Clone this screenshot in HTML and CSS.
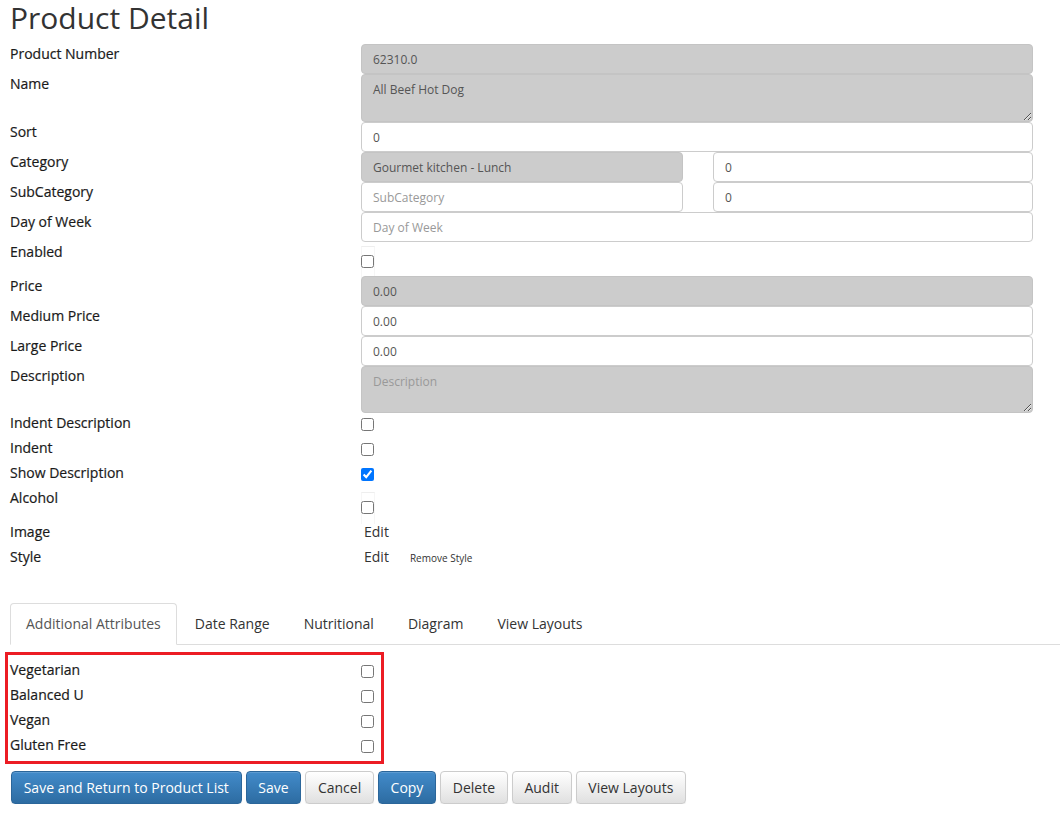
FILE: index.html
```html
<!DOCTYPE html>
<html lang="en">
<head>
    <meta charset="UTF-8">
    <title>Product Detail</title>
    <link rel="stylesheet" href="styles.css">
</head>
<body>
    <div class="page">
        <h1 class="page-title">Product Detail</h1>

        <div class="form">
            <div class="field">
                <label>Product Number</label>
                <input class="control readonly" type="text" value="62310.0" readonly>
            </div>
            <div class="field">
                <label>Name</label>
                <textarea class="control readonly area-name" readonly>All Beef Hot Dog</textarea>
            </div>
            <div class="field">
                <label>Sort</label>
                <input class="control" type="text" value="0">
            </div>
            <div class="field">
                <label>Category</label>
                <div class="split">
                    <input class="control readonly" type="text" value="Gourmet kitchen - Lunch" readonly>
                    <input class="control" type="text" value="0">
                </div>
            </div>
            <div class="field">
                <label>SubCategory</label>
                <div class="split">
                    <input class="control" type="text" placeholder="SubCategory">
                    <input class="control" type="text" value="0">
                </div>
            </div>
            <div class="field">
                <label>Day of Week</label>
                <input class="control" type="text" placeholder="Day of Week">
            </div>
            <div class="field tall">
                <label>Enabled</label>
                <div class="check-wrap"><input type="checkbox"></div>
            </div>
            <div class="field">
                <label>Price</label>
                <input class="control readonly" type="text" value="0.00" readonly>
            </div>
            <div class="field">
                <label>Medium Price</label>
                <input class="control" type="text" value="0.00">
            </div>
            <div class="field">
                <label>Large Price</label>
                <input class="control" type="text" value="0.00">
            </div>
            <div class="field">
                <label>Description</label>
                <textarea class="control readonly area-desc" placeholder="Description" readonly></textarea>
            </div>
            <div class="field short">
                <label>Indent Description</label>
                <input type="checkbox">
            </div>
            <div class="field short">
                <label>Indent</label>
                <input type="checkbox">
            </div>
            <div class="field short">
                <label>Show Description</label>
                <input type="checkbox" checked>
            </div>
            <div class="field tall">
                <label>Alcohol</label>
                <div class="check-wrap"><input type="checkbox"></div>
            </div>
            <div class="field short">
                <label>Image</label>
                <div class="links"><a class="link">Edit</a></div>
            </div>
            <div class="field short">
                <label>Style</label>
                <div class="links"><a class="link">Edit</a><a class="link-small">Remove Style</a></div>
            </div>
        </div>

        <ul class="tabs">
            <li class="tab active">Additional Attributes</li>
            <li class="tab">Date Range</li>
            <li class="tab">Nutritional</li>
            <li class="tab">Diagram</li>
            <li class="tab">View Layouts</li>
        </ul>

        <div class="attributes">
            <div class="field short">
                <label>Vegetarian</label>
                <input type="checkbox">
            </div>
            <div class="field short">
                <label>Balanced U</label>
                <input type="checkbox">
            </div>
            <div class="field short">
                <label>Vegan</label>
                <input type="checkbox">
            </div>
            <div class="field short">
                <label>Gluten Free</label>
                <input type="checkbox">
            </div>
        </div>

        <div class="actions">
            <button class="btn primary">Save and Return to Product List</button>
            <button class="btn primary">Save</button>
            <button class="btn">Cancel</button>
            <button class="btn primary">Copy</button>
            <button class="btn">Delete</button>
            <button class="btn">Audit</button>
            <button class="btn">View Layouts</button>
        </div>
    </div>
</body>
</html>
```

FILE: styles.css
```css
* {
    box-sizing: border-box;
}
body {
    margin: 0;
    font-family: "Open Sans", "Liberation Sans", sans-serif;
    font-size: 14px;
    color: #333;
    background: #fff;
}
.page {
    padding-left: 10px;
}
.page-title {
    margin: 0 0 8px;
    font-size: 30px;
    line-height: 36px;
    font-weight: 400;
    color: #333;
}
.form {
    padding-right: 27px;
}
.field {
    display: grid;
    grid-template-columns: 351px 1fr;
    align-items: start;
}
.field label {
    font-weight: 500;
    line-height: 20px;
    color: #1a1a1a;
    -webkit-text-stroke: 0.2px #1a1a1a;
}
.field.short {
    height: 25px;
}
.field.short input[type="checkbox"] {
    margin: 5px 0 0;
}
.field.tall {
    height: 34px;
}
.check-wrap {
    width: 14px;
    height: 32px;
    margin-top: 4px;
    border-top: 1px solid #eee;
    border-left: 1px solid #f6f6f6;
    border-right: 1px solid #f6f6f6;
}
.check-wrap input {
    margin: 8px 0 0 -1px;
}
input[type="checkbox"] {
    width: 13px;
    height: 13px;
}
.control {
    display: block;
    width: 100%;
    height: 30px;
    padding: 6px 11px;
    border: 1px solid #ccc;
    border-radius: 4px;
    background: #fff;
    font-family: "Open Sans", "Liberation Sans", sans-serif;
    font-size: 12px;
    color: #555;
    outline: none;
}
.control::placeholder {
    color: #999;
}
.control.readonly {
    background: #ccc;
    border-color: #c4c4c4;
}
textarea.control {
    resize: vertical;
}
.area-name {
    height: 48px;
}
.area-desc {
    height: 47px;
}
.split {
    display: grid;
    grid-template-columns: 322px 1fr;
    column-gap: 30px;
}
.links {
    display: flex;
    align-items: baseline;
    padding-left: 3px;
    line-height: 20px;
}
.link {
    color: #333;
}
.link-small {
    margin-left: 21px;
    font-size: 10px;
    color: #333;
}
.tabs {
    display: flex;
    list-style: none;
    margin: 31px 0 0;
    padding: 0;
    border-bottom: 1px solid #ddd;
}
.tab {
    margin: 0 2px -1px 0;
    padding: 10px 15px;
    line-height: 20px;
    border: 1px solid transparent;
    border-radius: 4px 4px 0 0;
    color: #333;
}
.tab.active {
    color: #555;
    border-color: #ddd #ddd transparent;
    background: #fff;
}
.attributes {
    width: 379px;
    margin: 7px 0 0 -5px;
    padding: 5px 0 1px 2px;
    border: 3px solid #ec1c24;
}
.actions {
    display: flex;
    gap: 4px;
    margin-top: 7px;
    padding-left: 1px;
}
.btn {
    height: 33px;
    padding: 0 11.7px;
    border: 1px solid #ccc;
    border-radius: 4px;
    background: linear-gradient(#fff, #e0e0e0);
    box-shadow: inset 0 1px 0 rgba(255,255,255,.15), 0 1px 1px rgba(0,0,0,.075);
    font-family: "Open Sans", "Liberation Sans", sans-serif;
    font-size: 14px;
    color: #333;
    cursor: pointer;
}
.btn.primary {
    border-color: #2b669a;
    background: linear-gradient(#428bca, #2d6ca2);
    color: #fff;
}
```
